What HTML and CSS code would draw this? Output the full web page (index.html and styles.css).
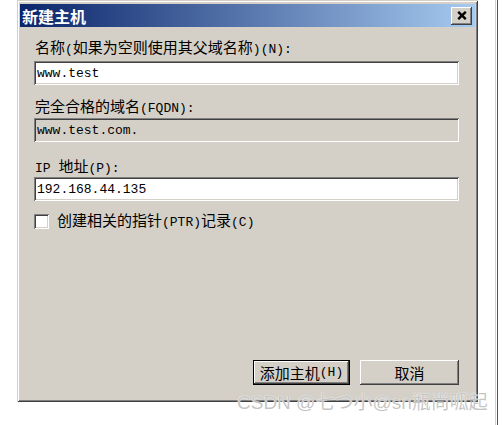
FILE: index.html
```html
<!DOCTYPE html>
<html lang="zh">
<head>
<meta charset="utf-8">
<title>新建主机</title>
<link rel="stylesheet" href="styles.css">
</head>
<body>
<div class="screen">
  <div class="dialog">
    <div class="titlebar">
      <span class="title">新建主机</span>
      <div class="close"><svg width="10" height="9" viewBox="0 0 10 9"><path d="M1.2 0.8 L8.8 8.2 M8.8 0.8 L1.2 8.2" stroke="#000" stroke-width="2.4" fill="none"/></svg></div>
    </div>
    <div class="content">
      <div class="lbl l1">名称<span class="m">(</span>如果为空则使用其父域名称<span class="m">)(N):</span></div>
      <div class="field f1"><span class="m">www.test</span></div>
      <div class="lbl l2">完全合格的域名<span class="m">(FQDN):</span></div>
      <div class="field f2 readonly"><span class="m">www.test.com.</span></div>
      <div class="lbl l3"><span class="m">IP </span>地址<span class="m">(P):</span></div>
      <div class="field f3"><span class="m">192.168.44.135</span></div>
      <div class="check-row">
        <span class="checkbox"></span>
        <span class="check-label">创建相关的指针<span class="m">(PTR)</span>记录<span class="m">(C)</span></span>
      </div>
      <div class="buttons">
        <div class="btn default">添加主机<span class="m">(H)</span></div>
        <div class="btn cancel">取消</div>
      </div>
    </div>
  </div>
  <div class="edge"></div>
  <div class="watermark">CSDN @七つ小@sn瓶尚呱起</div>
</div>
</body>
</html>
```

FILE: styles.css
```css
html, body {
  margin: 0;
  padding: 0;
  background: #ffffff;
}

.screen {
  position: relative;
  width: 503px;
  height: 425px;
  display: flex;
  align-items: flex-start;
  font-family: "Noto Sans CJK SC", "Liberation Sans", sans-serif;
  font-size: 15px;
  color: #000;
}

.dialog {
  margin-left: 17px;
  width: 461px;
  height: 402px;
  box-sizing: border-box;
  padding: 4px 3px 3px 3px;
  background: #d4d0c8;
  box-shadow: inset 1px 1px #d4d0c8, inset -1px -1px #404040, inset 2px 2px #ffffff, inset -2px -2px #808080;
  display: flex;
  flex-direction: column;
}

.titlebar {
  height: 23px;
  display: flex;
  align-items: center;
  justify-content: space-between;
  padding-left: 2px;
  padding-right: 3px;
  background: linear-gradient(to right, #0a246a, #a6caf0);
}

.title {
  color: #fff;
  font-weight: bold;
  font-size: 16px;
  line-height: 20px;
}

.close {
  width: 21px;
  height: 18px;
  box-sizing: border-box;
  background: #d4d0c8;
  box-shadow: inset -1px -1px #404040, inset 1px 1px #ffffff, inset -2px -2px #808080, inset 2px 2px #d4d0c8;
  display: flex;
  align-items: center;
  justify-content: center;
}

.content {
  display: flex;
  flex-direction: column;
  padding: 0 16px 0 14px;
}

.m {
  font-family: "Liberation Mono", monospace;
  font-size: 13px;
}

.lbl {
  line-height: 18px;
  height: 18px;
  padding-left: 1px;
  white-space: nowrap;
}

.l1 { margin-top: 11px; }
.l2 { margin-top: 12px; }
.l3 { margin-top: 15px; }

.field {
  height: 24px;
  box-sizing: border-box;
  background: #ffffff;
  box-shadow: inset 1px 1px #808080, inset -1px -1px #ffffff, inset 2px 2px #404040, inset -2px -2px #d4d0c8;
  padding-left: 3px;
  display: flex;
  align-items: center;
}

.field.readonly { background: #d4d0c8; }

.f1 { margin-top: 5px; }
.f2 { margin-top: 3px; }
.f3 { margin-top: 2px; }

.check-row {
  margin-top: 13px;
  height: 15px;
  display: flex;
  align-items: center;
  gap: 8px;
}

.checkbox {
  width: 15px;
  height: 15px;
  box-sizing: border-box;
  background: #fff;
  box-shadow: inset 1px 1px #808080, inset -1px -1px #ffffff, inset 2px 2px #404040, inset -2px -2px #d4d0c8;
}

.check-label {
  line-height: 18px;
  white-space: nowrap;
}

.buttons {
  margin-top: 131px;
  display: flex;
  justify-content: flex-end;
  gap: 10px;
}

.btn {
  height: 25px;
  box-sizing: border-box;
  display: flex;
  align-items: center;
  justify-content: center;
  background: #d4d0c8;
  box-shadow: inset -1px -1px #404040, inset 1px 1px #ffffff, inset -2px -2px #808080, inset 2px 2px #d4d0c8;
  white-space: nowrap;
}

.btn.default {
  width: 97px;
  box-shadow: inset 0 0 0 1px #000, inset -2px -2px #404040, inset 2px 2px #ffffff, inset -3px -3px #808080;
}

.btn.cancel { width: 99px; }

.edge {
  margin-left: 17px;
  width: 3px;
  height: 425px;
  background: linear-gradient(to right, #d4d0c8 0, #d4d0c8 1px, #ffffff 1px, #ffffff 2px, #555555 2px);
}

.watermark {
  position: absolute;
  left: 237px;
  top: 392px;
  font-family: "Liberation Sans", "Noto Sans CJK SC", sans-serif;
  font-size: 19px;
  line-height: 22px;
  color: rgba(140, 140, 140, 0.5);
  text-shadow: 0 0 1px #ffffff, 0 0 1px #ffffff;
  white-space: nowrap;
}
```
